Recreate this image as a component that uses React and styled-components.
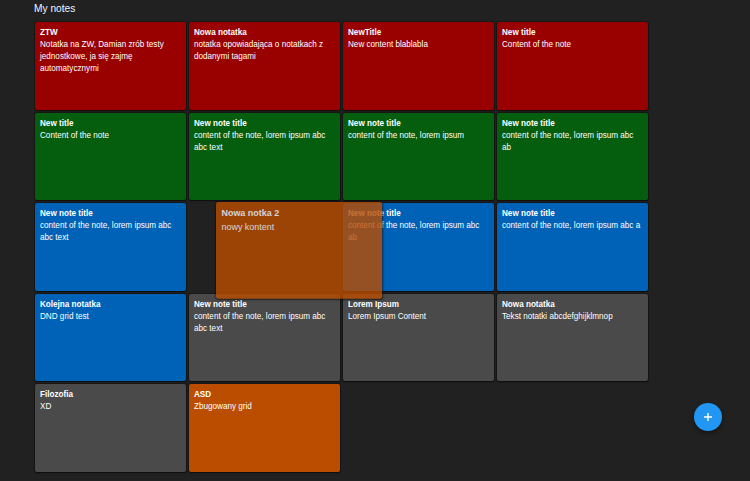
import React from 'react';
import styled, { createGlobalStyle } from 'styled-components';

const GlobalStyle = createGlobalStyle`
  html, body {
    margin: 0;
    padding: 0;
    background: #212121;
    font-family: "Liberation Sans", Arial, sans-serif;
    overflow: hidden;
  }
`;

const colors = {
  red: '#990000',
  green: '#055e0d',
  blue: '#0062b7',
  gray: '#4a4a4a',
  orange: '#bb4d00',
};

const Page = styled.div`
  width: 750px;
  height: 481px;
  box-sizing: border-box;
`;

const Heading = styled.h1`
  margin: 0;
  height: 22px;
  padding: 3px 0 0 34px;
  box-sizing: border-box;
  font-size: 10.2px;
  line-height: 12px;
  font-weight: normal;
  color: #eef3ff;
`;

const Board = styled.div`
  position: relative;
  margin-left: 35px;
  display: grid;
  grid-template-columns: repeat(4, 151px);
  grid-auto-rows: 87.5px;
  gap: 3px;
`;

const Card = styled.div`
  box-sizing: border-box;
  width: 151px;
  height: 87.5px;
  padding: 5px 5px;
  border-radius: 2px;
  background: ${(p) => colors[p.$color]};
  box-shadow: 0 0 0 1px rgba(0, 0, 0, 0.25), 0 1px 2px rgba(0, 0, 0, 0.5);
  color: #fff;
  font-size: 8.15px;
  line-height: 12px;
  overflow: hidden;

  ${(p) =>
    p.$dragging &&
    `
    position: absolute;
    left: 181px;
    top: 180px;
    transform: scale(1.1);
    transform-origin: top left;
    opacity: 0.8;
    z-index: 2;
  `}
`;

const Slot = styled.div`
  visibility: hidden;
`;

const Title = styled.div`
  font-weight: bold;
`;

const Content = styled.div``;

const Fab = styled.button`
  position: fixed;
  left: 694px;
  top: 402.5px;
  width: 28px;
  height: 28px;
  padding: 0;
  border: none;
  border-radius: 50%;
  background: #2196f3;
  box-shadow: 0 2px 4px rgba(0, 0, 0, 0.4);
  display: flex;
  align-items: center;
  justify-content: center;
  cursor: pointer;
`;

const notes = [
  { title: 'ZTW', text: 'Notatka na ZW, Damian zrób testy jednostkowe, ja się zajmę automatycznymi', color: 'red' },
  { title: 'Nowa notatka', text: 'notatka opowiadająca o notatkach z dodanymi tagami', color: 'red' },
  { title: 'NewTitle', text: 'New content blablabla', color: 'red' },
  { title: 'New title', text: 'Content of the note', color: 'red' },
  { title: 'New title', text: 'Content of the note', color: 'green' },
  { title: 'New note title', text: 'content of the note, lorem ipsum abc abc text', color: 'green' },
  { title: 'New note title', text: 'content of the note, lorem ipsum', color: 'green' },
  { title: 'New note title', text: 'content of the note, lorem ipsum abc ab', color: 'green' },
  { title: 'New note title', text: 'content of the note, lorem ipsum abc abc text', color: 'blue' },
  { slot: true },
  { title: 'New note title', text: 'content of the note, lorem ipsum abc ab', color: 'blue' },
  { title: 'New note title', text: 'content of the note, lorem ipsum abc a', color: 'blue' },
  { title: 'Kolejna notatka', text: 'DND grid test', color: 'blue' },
  { title: 'New note title', text: 'content of the note, lorem ipsum abc abc text', color: 'gray' },
  { title: 'Lorem Ipsum', text: 'Lorem Ipsum Content', color: 'gray' },
  { title: 'Nowa notatka', text: 'Tekst notatki abcdefghijklmnop', color: 'gray' },
  { title: 'Filozofia', text: 'XD', color: 'gray' },
  { title: 'ASD', text: 'Zbugowany grid', color: 'orange' },
];

const App = () => (
  <Page>
    <GlobalStyle />
    <Heading>My notes</Heading>
    <Board>
      {notes.map((n, i) =>
        n.slot ? (
          <Slot key={i} />
        ) : (
          <Card key={i} $color={n.color}>
            <Title>{n.title}</Title>
            <Content>{n.text}</Content>
          </Card>
        )
      )}
      <Card $color="orange" $dragging>
        <Title>Nowa notka 2</Title>
        <Content>nowy kontent</Content>
      </Card>
    </Board>
    <Fab aria-label="add">
      <svg width="10" height="10" viewBox="0 0 10 10">
        <path d="M5 1v8M1 5h8" stroke="#fff" strokeWidth="1.4" />
      </svg>
    </Fab>
  </Page>
);

export default App;
